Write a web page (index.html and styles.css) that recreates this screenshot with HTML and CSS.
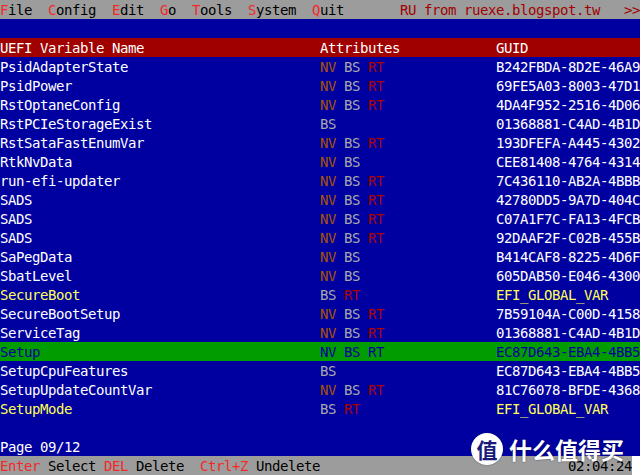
FILE: index.html
```html
<!DOCTYPE html>
<html>
<head>
<meta charset="utf-8">
<link rel="stylesheet" href="styles.css">
</head>
<body>
<div class="screen">
  <div class="row menu"><span class="hk">F</span>ile  <span class="hk">C</span>onfig  <span class="hk">E</span>dit  <span class="hk">G</span>o  <span class="hk">T</span>ools  <span class="hk">S</span>ystem  <span class="hk">Q</span>uit       <span class="credit">RU from ruexe.blogspot.tw   &gt;&gt;</span></div>
  <div class="row blank"></div>
  <div class="row header"><span class="c-name">UEFI Variable Name</span><span class="c-attr">Attributes</span><span class="c-guid">GUID</span></div>

  <div class="row"><span class="c-name">PsidAdapterState</span><span class="c-attr"><span class="nv">NV</span> <span class="bs">BS</span> <span class="rt">RT</span></span><span class="c-guid">B242FBDA-8D2E-46A9</span></div>
  <div class="row"><span class="c-name">PsidPower</span><span class="c-attr"><span class="nv">NV</span> <span class="bs">BS</span> <span class="rt">RT</span></span><span class="c-guid">69FE5A03-8003-47D1</span></div>
  <div class="row"><span class="c-name">RstOptaneConfig</span><span class="c-attr"><span class="nv">NV</span> <span class="bs">BS</span> <span class="rt">RT</span></span><span class="c-guid">4DA4F952-2516-4D06</span></div>
  <div class="row"><span class="c-name">RstPCIeStorageExist</span><span class="c-attr"><span class="bs">BS</span></span><span class="c-guid">01368881-C4AD-4B1D</span></div>
  <div class="row"><span class="c-name">RstSataFastEnumVar</span><span class="c-attr"><span class="nv">NV</span> <span class="bs">BS</span> <span class="rt">RT</span></span><span class="c-guid">193DFEFA-A445-4302</span></div>
  <div class="row"><span class="c-name">RtkNvData</span><span class="c-attr"><span class="nv">NV</span> <span class="bs">BS</span></span><span class="c-guid">CEE81408-4764-4314</span></div>
  <div class="row"><span class="c-name">run-efi-updater</span><span class="c-attr"><span class="nv">NV</span> <span class="bs">BS</span> <span class="rt">RT</span></span><span class="c-guid">7C436110-AB2A-4BBB</span></div>
  <div class="row"><span class="c-name">SADS</span><span class="c-attr"><span class="nv">NV</span> <span class="bs">BS</span> <span class="rt">RT</span></span><span class="c-guid">42780DD5-9A7D-404C</span></div>
  <div class="row"><span class="c-name">SADS</span><span class="c-attr"><span class="nv">NV</span> <span class="bs">BS</span> <span class="rt">RT</span></span><span class="c-guid">C07A1F7C-FA13-4FCB</span></div>
  <div class="row"><span class="c-name">SADS</span><span class="c-attr"><span class="nv">NV</span> <span class="bs">BS</span> <span class="rt">RT</span></span><span class="c-guid">92DAAF2F-C02B-455B</span></div>
  <div class="row"><span class="c-name">SaPegData</span><span class="c-attr"><span class="nv">NV</span> <span class="bs">BS</span></span><span class="c-guid">B414CAF8-8225-4D6F</span></div>
  <div class="row"><span class="c-name">SbatLevel</span><span class="c-attr"><span class="nv">NV</span> <span class="bs">BS</span></span><span class="c-guid">605DAB50-E046-4300</span></div>
  <div class="row global"><span class="c-name">SecureBoot</span><span class="c-attr"><span class="bs">BS</span> <span class="rt">RT</span></span><span class="c-guid">EFI_GLOBAL_VAR</span></div>
  <div class="row"><span class="c-name">SecureBootSetup</span><span class="c-attr"><span class="nv">NV</span> <span class="bs">BS</span> <span class="rt">RT</span></span><span class="c-guid">7B59104A-C00D-4158</span></div>
  <div class="row"><span class="c-name">ServiceTag</span><span class="c-attr"><span class="nv">NV</span> <span class="bs">BS</span> <span class="rt">RT</span></span><span class="c-guid">01368881-C4AD-4B1D</span></div>
  <div class="row selected"><span class="c-name">Setup</span><span class="c-attr"><span class="nv">NV</span> <span class="bs">BS</span> <span class="rt">RT</span></span><span class="c-guid">EC87D643-EBA4-4BB5</span></div>
  <div class="row"><span class="c-name">SetupCpuFeatures</span><span class="c-attr"><span class="bs">BS</span></span><span class="c-guid">EC87D643-EBA4-4BB5</span></div>
  <div class="row"><span class="c-name">SetupUpdateCountVar</span><span class="c-attr"><span class="nv">NV</span> <span class="bs">BS</span> <span class="rt">RT</span></span><span class="c-guid">81C76078-BFDE-4368</span></div>
  <div class="row global"><span class="c-name">SetupMode</span><span class="c-attr"><span class="bs">BS</span> <span class="rt">RT</span></span><span class="c-guid">EFI_GLOBAL_VAR</span></div>

  <div class="row blank"></div>
  <div class="row">Page 09/12</div>
  <div class="row status"><span class="status-keys"><span class="hk">Enter</span> Select <span class="hk">DEL</span> Delete  <span class="hk">Ctrl+Z</span> Undelete</span><span class="clock">02:04:24</span></div>

  <div class="watermark"><span class="wm-badge">值</span><span class="wm-text">什么值得买</span></div>
</div>
</body>
</html>
```

FILE: styles.css
```css
html, body {
  margin: 0;
  padding: 0;
  background: #0000a0;
}

.screen {
  position: relative;
  width: 640px;
  height: 475px;
  overflow: hidden;
  background: #0000a0;
  color: #ffffff;
  font-family: "DejaVu Sans Mono", "Liberation Mono", monospace;
  font-size: 14px;
  letter-spacing: -0.43px;
  display: grid;
  grid-template-rows: repeat(25, 19px);
}

.row {
  display: flex;
  height: 19px;
  line-height: 20px;
  white-space: pre;
  overflow: hidden;
}

.menu {
  display: block;
  background: #9c9c9c;
  color: #000000;
}

.hk {
  color: #f52828;
}

.credit {
  color: #a00000;
}

.header {
  background: #a00000;
  color: #ffffff;
}

.c-name {
  width: 320px;
  flex: none;
}

.c-attr {
  width: 176px;
  flex: none;
}

.c-guid {
  flex: 1;
}

.nv { color: #a85400; }
.bs { color: #a8a8a8; }
.rt { color: #b00000; }

.global .c-name,
.global .c-guid {
  color: #ffff55;
}

.selected {
  background: #009c00;
  color: #0000a0;
}

.selected .nv,
.selected .bs,
.selected .rt {
  color: #0000a0;
}

.status {
  background: #9c9c9c;
  color: #000000;
  width: 632px;
}

.status-keys {
  flex: 1;
}

.clock {
  width: 64px;
  flex: none;
}

.screen::after {
  content: "";
  position: absolute;
  right: 0;
  bottom: 0;
  width: 8px;
  height: 19px;
  background: #ffffff;
}

.watermark {
  position: absolute;
  left: 471px;
  top: 433px;
  display: flex;
  align-items: center;
  gap: 6px;
  letter-spacing: 0;
  font-family: "Noto Sans CJK SC", sans-serif;
  pointer-events: none;
}

.wm-badge {
  width: 32px;
  height: 32px;
  border-radius: 50%;
  background: #ffffff;
  color: #1a1a7a;
  font-size: 21px;
  font-weight: 700;
  line-height: 32px;
  text-align: center;
  box-shadow: 0 0 2px rgba(0, 0, 0, 0.4);
}

.wm-text {
  color: #ffffff;
  font-size: 23px;
  font-weight: 700;
  line-height: 30px;
  text-shadow: 0 0 2px rgba(0, 0, 0, 0.5);
}
```
